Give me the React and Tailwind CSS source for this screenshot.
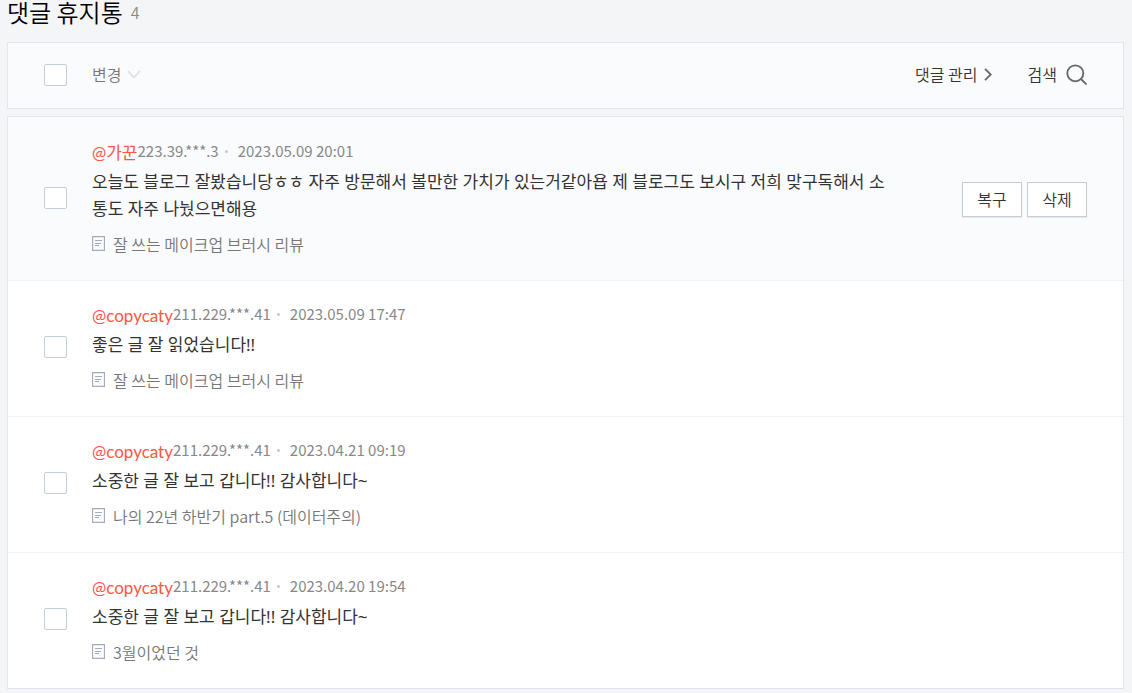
const comments = [
  {
    id: 1,
    author: '@가꾼',
    ip: '223.39.***.3',
    date: '2023.05.09 20:01',
    text: '오늘도 블로그 잘봤습니당ㅎㅎ 자주 방문해서 볼만한 가치가 있는거같아욥 제 블로그도 보시구 저희 맞구독해서 소통도 자주 나눴으면해용',
    post: '잘 쓰는 메이크업 브러시 리뷰',
    active: true,
  },
  {
    id: 2,
    author: '@copycaty',
    ip: '211.229.***.41',
    date: '2023.05.09 17:47',
    text: '좋은 글 잘 읽었습니다!!',
    post: '잘 쓰는 메이크업 브러시 리뷰',
  },
  {
    id: 3,
    author: '@copycaty',
    ip: '211.229.***.41',
    date: '2023.04.21 09:19',
    text: '소중한 글 잘 보고 갑니다!! 감사합니다~',
    post: '나의 22년 하반기 part.5 (데이터주의)',
  },
  {
    id: 4,
    author: '@copycaty',
    ip: '211.229.***.41',
    date: '2023.04.20 19:54',
    text: '소중한 글 잘 보고 갑니다!! 감사합니다~',
    post: '3월이었던 것',
  },
];

function Checkbox({ label }) {
  return (
    <input
      type="checkbox"
      aria-label={label}
      className="block h-[22px] w-[23px] shrink-0 appearance-none rounded-xs border border-[#c4cdd9] bg-white checked:bg-[#c4cdd9]"
    />
  );
}

function PostIcon() {
  return (
    <svg width="13" height="15" viewBox="0 0 13 15" fill="none" stroke="#a3abbd" className="mb-0.5 shrink-0" aria-hidden="true">
      <path d="M.5.5h12v14H.5z" strokeWidth="1.3" />
      <path d="M3 4.5h7M3 7.5h6M3 9.5h4" />
    </svg>
  );
}

function ActionButton({ children }) {
  return (
    <button
      type="button"
      className="h-[35px] w-15 border border-[#c4cdd6] bg-white text-base leading-5 text-[#333] shadow-[0_1px_1px_rgba(0,0,0,0.06)]"
    >
      {children}
    </button>
  );
}

function Comment({ comment }) {
  return (
    <li
      className={
        comment.active
          ? 'flex items-center border-b border-[#f0f2f6] bg-[#fafbfd] px-9 last:border-b-0'
          : 'flex items-center border-b border-[#f0f2f6] bg-white px-9 last:border-b-0'
      }
    >
      <div className="pb-[3px]">
        <Checkbox label={`${comment.author} 댓글 선택`} />
      </div>
      <div className="ml-[25px] min-w-0 flex-1 pt-[21px] pb-6">
        <div className="flex h-6 items-center text-[15px] leading-6 font-normal text-[#888]">
          <a href="#author" className="pt-1 font-[Lato,'Noto_Sans_CJK_KR',sans-serif] text-[17px] text-[#ff5544]">
            {comment.author}
          </a>
          <span>{comment.ip}</span>
          <span className="mr-2.5 ml-1.5 size-[3px] rounded-full bg-[#c4cad3]" />
          <span>{comment.date}</span>
        </div>
        <p className="mt-[5px] max-w-[796px] font-['Noto_Sans','Noto_Sans_CJK_KR',sans-serif] text-[17px] leading-[27px] font-normal break-all text-[#333]">
          {comment.text}
        </p>
        <a href="#post" className="mt-2.5 flex h-6 items-center gap-2 text-base leading-6 text-[#777]">
          <PostIcon />
          {comment.post}
        </a>
      </div>
      {comment.active && (
        <div className="ml-3 flex gap-[5px]">
          <ActionButton>복구</ActionButton>
          <ActionButton>삭제</ActionButton>
        </div>
      )}
    </li>
  );
}

export default function App() {
  return (
    <main className="min-h-screen bg-[#f3f5f7] pr-2 pb-1 pl-[7px] font-['Noto_Sans_CJK_KR',sans-serif] font-[350]">
      <h1 className="flex h-[42px] items-start gap-2 text-2xl leading-6 text-black">
        댓글 휴지통
        <span className="text-base leading-6 text-[#888]">4</span>
      </h1>

      <div className="flex h-[67px] items-center border border-[#e1e5ee] bg-[#fafbfd] px-9 pb-px text-base text-[#333]">
        <Checkbox label="전체 선택" />
        <button type="button" className="mb-0.5 ml-[25px] flex items-center gap-1.5 text-[#777]">
          변경
          <svg width="14" height="9" viewBox="0 0 14 9" fill="none" stroke="#dfe0e2" strokeWidth="1.8" aria-hidden="true">
            <path d="M1 1l6 6.5L13 1" />
          </svg>
        </button>
        <a href="#manage" className="mb-0.5 ml-auto flex items-center gap-1.5">
          댓글 관리
          <svg width="8" height="13" viewBox="0 0 8 13" fill="none" stroke="#666" strokeWidth="1.8" aria-hidden="true">
            <path d="M1 .8l5.8 5.7L1 12.2" />
          </svg>
        </a>
        <button type="button" className="mb-0.5 ml-9 flex items-center gap-2">
          검색
          <svg width="22" height="22" viewBox="0 0 22 22" fill="none" stroke="#666" strokeWidth="1.8" aria-hidden="true">
            <circle cx="10.3" cy="10.3" r="8" />
            <path d="M16 16l5.5 5.5" />
          </svg>
        </button>
      </div>

      <ul className="mt-[7px] border border-[#e1e5ee] bg-[#fafbfd] pt-px">
        {comments.map((comment) => (
          <Comment key={comment.id} comment={comment} />
        ))}
      </ul>
    </main>
  );
}
